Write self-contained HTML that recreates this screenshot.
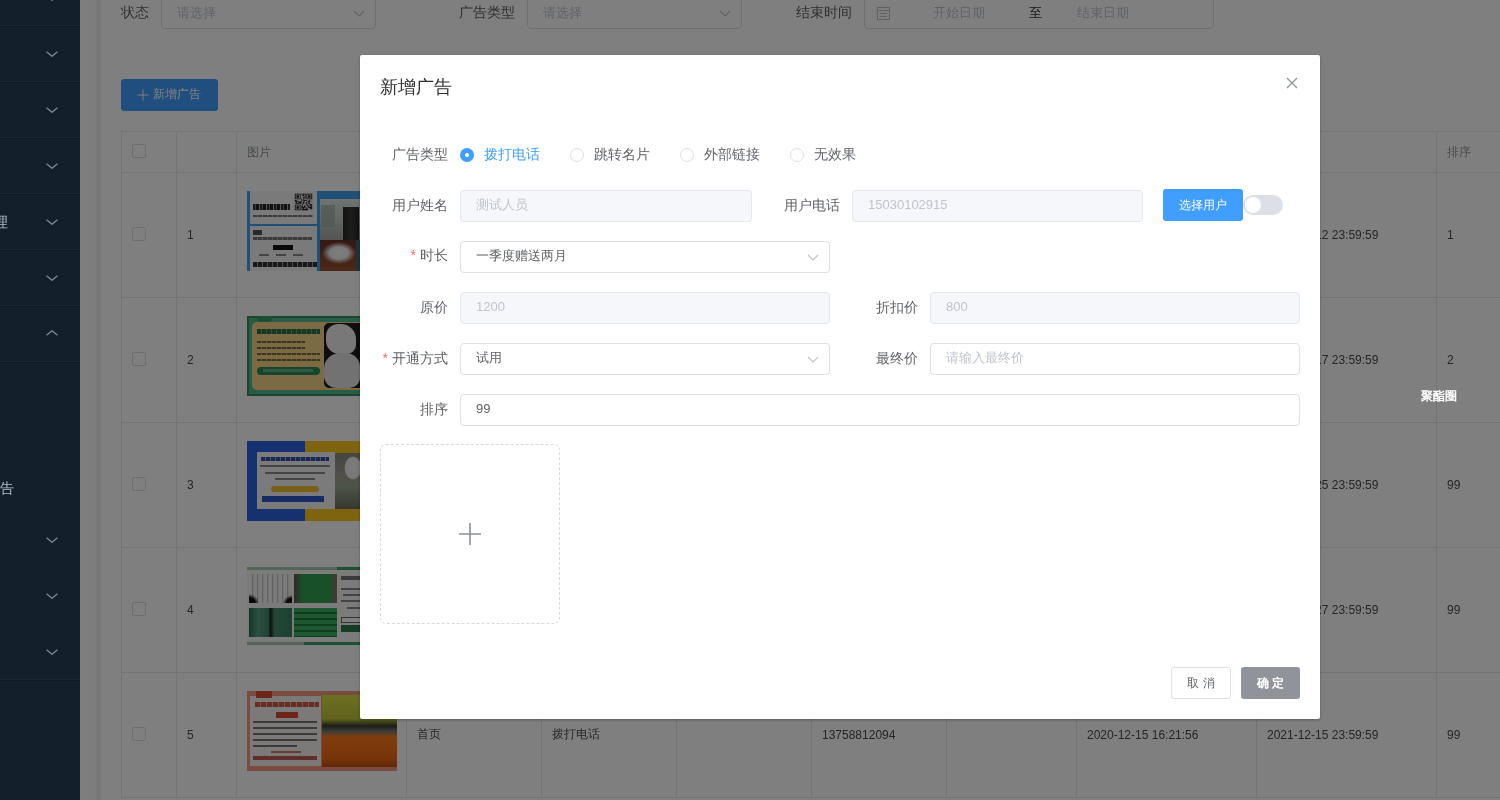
<!DOCTYPE html>
<html><head><meta charset="utf-8">
<style>
*{box-sizing:border-box;margin:0;padding:0}
html,body{width:1500px;height:800px;overflow:hidden;background:#fff;}
body{will-change:transform;font-family:"Liberation Sans",sans-serif;font-size:14px;color:#606266}
.a{position:absolute;white-space:nowrap}
#side{position:absolute;left:0;top:0;width:80px;height:800px;background:#131f2b;overflow:hidden}
.dv{position:absolute;left:0;width:80px;height:1px;background:#1a2633;box-shadow:0 1px 0 #0f1a24}
.chev{position:absolute;left:46px;width:12px;height:7px}
#gut{position:absolute;left:80px;top:0;width:21px;height:800px;background:linear-gradient(to right,#fdfdfd 0,#fbfbfb 16px,#f0f0f0 17px,#f0f0f0 20px,#fff 21px)}
.lbl{position:absolute;font-size:14px;color:#606266;line-height:16px;white-space:nowrap}
.sel{position:absolute;height:32px;border:1px solid #dcdfe6;border-radius:4px;background:#fff}
.ph{position:absolute;font-size:13px;color:#c0c4cc;line-height:16px;white-space:nowrap}
.tbl{position:absolute;left:121px;top:131px;width:1400px;height:667px}
.hl{position:absolute;height:1px;background:#e8e8e8}
.vl{position:absolute;width:1px;background:#e8e8e8}
.cb{position:absolute;width:14px;height:14px;border:1px solid #dcdfe6;border-radius:2px;background:#fff}
.td{position:absolute;font-size:12px;color:#4a4c50;line-height:14px;white-space:nowrap}
#ov{position:absolute;left:0;top:0;width:1500px;height:800px;background:rgba(0,0,0,.5)}
#dlg{position:absolute;left:360px;top:55px;width:960px;height:664px;background:#fff;border-radius:2px;box-shadow:0 1px 3px rgba(0,0,0,.3)}
.fl{position:absolute;font-size:14px;color:#606266;line-height:16px;white-space:nowrap;text-align:right}
.inp{position:absolute;height:32px;border:1px solid #dcdfe6;border-radius:4px;background:#fff}
.inp.dis{background:#f5f7fa;border-color:#e4e7ed}
.it{position:absolute;left:15px;top:6px;font-size:13px;line-height:16px;color:#606266;white-space:nowrap}
.dis .it,.it.ph2{color:#c0c4cc}
.req{color:#f56c6c;margin-right:4px}
</style></head><body>
<!-- sidebar -->
<div id="gut"></div>

<!-- filter row -->
<div class="lbl" style="left:121px;top:3.5px">状态</div>
<div class="sel" style="left:161px;top:-3px;width:215px"><div class="ph" style="left:15px;top:6.5px">请选择</div><svg class="a" style="left:190.5px;top:12px" width="12" height="7" viewBox="0 0 12 7"><polyline points="1,1 6,6 11,1" fill="none" stroke="#c0c4cc" stroke-width="1.2"/></svg></div>
<div class="lbl" style="left:459px;top:3.5px">广告类型</div>
<div class="sel" style="left:527px;top:-3px;width:215px"><div class="ph" style="left:15px;top:6.5px">请选择</div><svg class="a" style="left:190.5px;top:12px" width="12" height="7" viewBox="0 0 12 7"><polyline points="1,1 6,6 11,1" fill="none" stroke="#c0c4cc" stroke-width="1.2"/></svg></div>
<div class="lbl" style="left:796px;top:3.5px">结束时间</div>
<div class="sel" style="left:864px;top:-3px;width:350px">
<svg class="a" style="left:12px;top:8px" width="13" height="14" viewBox="0 0 13 14"><rect x="0.5" y="1.5" width="12" height="12" fill="none" stroke="#c0c4cc"/><path d="M0.5 4.5H12.5M3 7.5H10M3 10.5H10" stroke="#c0c4cc"/></svg>
<div class="ph" style="left:68px;top:6.5px">开始日期</div>
<div class="lbl" style="left:164px;top:6.5px;font-size:13px;color:#303133">至</div>
<div class="ph" style="left:212px;top:6.5px">结束日期</div>
</div>
<div class="a" style="left:121px;top:79px;width:97px;height:32px;border-radius:3px;background:#409eff;color:#fff;font-size:12px;line-height:14px;padding:8px 0 0 32px">新增广告<svg class="a" style="left:16px;top:10px" width="12" height="12" viewBox="0 0 12 12"><path d="M6 0.5V11.5M0.5 6H11.5" stroke="#fff" stroke-width="1" fill="none"/></svg></div>
<!-- table -->
<div class="hl" style="left:121px;top:131px;width:1379px"></div>
<div class="hl" style="left:121px;top:172px;width:1379px"></div>
<div class="hl" style="left:121px;top:297px;width:1379px"></div>
<div class="hl" style="left:121px;top:422px;width:1379px"></div>
<div class="hl" style="left:121px;top:547px;width:1379px"></div>
<div class="hl" style="left:121px;top:672px;width:1379px"></div>
<div class="hl" style="left:121px;top:797px;width:1379px"></div>
<div class="vl" style="left:121px;top:131px;height:667px"></div>
<div class="vl" style="left:176px;top:131px;height:667px"></div>
<div class="vl" style="left:236px;top:131px;height:667px"></div>
<div class="vl" style="left:406px;top:131px;height:667px"></div>
<div class="vl" style="left:541px;top:131px;height:667px"></div>
<div class="vl" style="left:676px;top:131px;height:667px"></div>
<div class="vl" style="left:811px;top:131px;height:667px"></div>
<div class="vl" style="left:946px;top:131px;height:667px"></div>
<div class="vl" style="left:1076px;top:131px;height:667px"></div>
<div class="vl" style="left:1256px;top:131px;height:667px"></div>
<div class="vl" style="left:1436px;top:131px;height:667px"></div>
<div class="cb" style="left:132px;top:144px"></div>
<div class="td" style="left:247px;top:145px;color:#909399">图片</div>
<div class="td" style="left:1447px;top:145px;color:#909399">排序</div>
<div class="cb" style="left:132px;top:227px"></div>
<div class="td" style="left:187px;top:227.5px">1</div>
<div class="td" style="left:1267px;top:227.5px">2021-12-12 23:59:59</div>
<div class="td" style="left:1447px;top:227.5px">1</div>
<div class="cb" style="left:132px;top:352px"></div>
<div class="td" style="left:187px;top:352.5px">2</div>
<div class="td" style="left:1267px;top:352.5px">2021-12-17 23:59:59</div>
<div class="td" style="left:1447px;top:352.5px">2</div>
<div class="cb" style="left:132px;top:477px"></div>
<div class="td" style="left:187px;top:477.5px">3</div>
<div class="td" style="left:1267px;top:477.5px">2021-12-25 23:59:59</div>
<div class="td" style="left:1447px;top:477.5px">99</div>
<div class="cb" style="left:132px;top:602px"></div>
<div class="td" style="left:187px;top:602.5px">4</div>
<div class="td" style="left:1267px;top:602.5px">2021-12-27 23:59:59</div>
<div class="td" style="left:1447px;top:602.5px">99</div>
<div class="cb" style="left:132px;top:727px"></div>
<div class="td" style="left:187px;top:727.5px">5</div>
<div class="td" style="left:1267px;top:727.5px">2021-12-15 23:59:59</div>
<div class="td" style="left:1447px;top:727.5px">99</div>
<div class="td" style="left:417px;top:726.5px">首页</div>
<div class="td" style="left:552px;top:726.5px">拨打电话</div>
<div class="td" style="left:822px;top:727.5px">13758812094</div>
<div class="td" style="left:1087px;top:727.5px">2020-12-15 16:21:56</div>
<div id="imgs">
<!-- img1 -->
<div class="a" style="left:247px;top:191px;width:150px;height:80px;background:#f4f4f4;overflow:hidden">
 <div class="a" style="left:0;top:0;width:3px;height:80px;background:#40a0ee"></div>
 <div class="a" style="left:3px;top:33px;width:68px;height:2px;background:#40a0ee"></div>
 <div class="a" style="left:70px;top:0;width:3px;height:80px;background:#40a0ee"></div>
 <svg class="a" style="left:47px;top:2px" width="19" height="18" viewBox="-1 -1 23 23" preserveAspectRatio="none"><rect x="-1" y="-1" width="23" height="23" fill="#e8e8e8"/><path d="M0 0h1v1h-1zM1 0h1v1h-1zM2 0h1v1h-1zM3 0h1v1h-1zM4 0h1v1h-1zM5 0h1v1h-1zM6 0h1v1h-1zM8 0h1v1h-1zM9 0h1v1h-1zM10 0h1v1h-1zM11 0h1v1h-1zM12 0h1v1h-1zM14 0h1v1h-1zM15 0h1v1h-1zM16 0h1v1h-1zM17 0h1v1h-1zM18 0h1v1h-1zM19 0h1v1h-1zM20 0h1v1h-1zM0 1h1v1h-1zM6 1h1v1h-1zM10 1h1v1h-1zM12 1h1v1h-1zM14 1h1v1h-1zM20 1h1v1h-1zM0 2h1v1h-1zM2 2h1v1h-1zM3 2h1v1h-1zM4 2h1v1h-1zM6 2h1v1h-1zM9 2h1v1h-1zM10 2h1v1h-1zM12 2h1v1h-1zM14 2h1v1h-1zM16 2h1v1h-1zM17 2h1v1h-1zM18 2h1v1h-1zM20 2h1v1h-1zM0 3h1v1h-1zM2 3h1v1h-1zM3 3h1v1h-1zM4 3h1v1h-1zM6 3h1v1h-1zM12 3h1v1h-1zM14 3h1v1h-1zM16 3h1v1h-1zM17 3h1v1h-1zM18 3h1v1h-1zM20 3h1v1h-1zM0 4h1v1h-1zM2 4h1v1h-1zM3 4h1v1h-1zM4 4h1v1h-1zM6 4h1v1h-1zM10 4h1v1h-1zM11 4h1v1h-1zM12 4h1v1h-1zM14 4h1v1h-1zM16 4h1v1h-1zM17 4h1v1h-1zM18 4h1v1h-1zM20 4h1v1h-1zM0 5h1v1h-1zM6 5h1v1h-1zM10 5h1v1h-1zM14 5h1v1h-1zM20 5h1v1h-1zM0 6h1v1h-1zM1 6h1v1h-1zM2 6h1v1h-1zM3 6h1v1h-1zM4 6h1v1h-1zM5 6h1v1h-1zM6 6h1v1h-1zM8 6h1v1h-1zM11 6h1v1h-1zM12 6h1v1h-1zM14 6h1v1h-1zM15 6h1v1h-1zM16 6h1v1h-1zM17 6h1v1h-1zM18 6h1v1h-1zM19 6h1v1h-1zM20 6h1v1h-1zM8 7h1v1h-1zM10 7h1v1h-1zM0 8h1v1h-1zM1 8h1v1h-1zM8 8h1v1h-1zM10 8h1v1h-1zM11 8h1v1h-1zM12 8h1v1h-1zM13 8h1v1h-1zM14 8h1v1h-1zM17 8h1v1h-1zM0 9h1v1h-1zM1 9h1v1h-1zM2 9h1v1h-1zM3 9h1v1h-1zM4 9h1v1h-1zM8 9h1v1h-1zM11 9h1v1h-1zM16 9h1v1h-1zM17 9h1v1h-1zM19 9h1v1h-1zM1 10h1v1h-1zM2 10h1v1h-1zM5 10h1v1h-1zM6 10h1v1h-1zM7 10h1v1h-1zM10 10h1v1h-1zM14 10h1v1h-1zM16 10h1v1h-1zM17 10h1v1h-1zM1 11h1v1h-1zM4 11h1v1h-1zM5 11h1v1h-1zM6 11h1v1h-1zM7 11h1v1h-1zM9 11h1v1h-1zM10 11h1v1h-1zM11 11h1v1h-1zM13 11h1v1h-1zM14 11h1v1h-1zM17 11h1v1h-1zM1 12h1v1h-1zM2 12h1v1h-1zM3 12h1v1h-1zM4 12h1v1h-1zM6 12h1v1h-1zM7 12h1v1h-1zM10 12h1v1h-1zM14 12h1v1h-1zM16 12h1v1h-1zM17 12h1v1h-1zM9 13h1v1h-1zM14 13h1v1h-1zM18 13h1v1h-1zM19 13h1v1h-1zM20 13h1v1h-1zM0 14h1v1h-1zM1 14h1v1h-1zM2 14h1v1h-1zM3 14h1v1h-1zM4 14h1v1h-1zM5 14h1v1h-1zM6 14h1v1h-1zM9 14h1v1h-1zM12 14h1v1h-1zM14 14h1v1h-1zM15 14h1v1h-1zM18 14h1v1h-1zM19 14h1v1h-1zM0 15h1v1h-1zM6 15h1v1h-1zM8 15h1v1h-1zM11 15h1v1h-1zM15 15h1v1h-1zM16 15h1v1h-1zM17 15h1v1h-1zM19 15h1v1h-1zM20 15h1v1h-1zM0 16h1v1h-1zM2 16h1v1h-1zM3 16h1v1h-1zM4 16h1v1h-1zM6 16h1v1h-1zM8 16h1v1h-1zM9 16h1v1h-1zM11 16h1v1h-1zM12 16h1v1h-1zM16 16h1v1h-1zM18 16h1v1h-1zM20 16h1v1h-1zM0 17h1v1h-1zM2 17h1v1h-1zM3 17h1v1h-1zM4 17h1v1h-1zM6 17h1v1h-1zM8 17h1v1h-1zM9 17h1v1h-1zM10 17h1v1h-1zM11 17h1v1h-1zM12 17h1v1h-1zM14 17h1v1h-1zM16 17h1v1h-1zM17 17h1v1h-1zM18 17h1v1h-1zM19 17h1v1h-1zM20 17h1v1h-1zM0 18h1v1h-1zM2 18h1v1h-1zM3 18h1v1h-1zM4 18h1v1h-1zM6 18h1v1h-1zM8 18h1v1h-1zM10 18h1v1h-1zM14 18h1v1h-1zM18 18h1v1h-1zM19 18h1v1h-1zM20 18h1v1h-1zM0 19h1v1h-1zM6 19h1v1h-1zM9 19h1v1h-1zM10 19h1v1h-1zM11 19h1v1h-1zM12 19h1v1h-1zM13 19h1v1h-1zM14 19h1v1h-1zM15 19h1v1h-1zM19 19h1v1h-1zM0 20h1v1h-1zM1 20h1v1h-1zM2 20h1v1h-1zM3 20h1v1h-1zM4 20h1v1h-1zM5 20h1v1h-1zM6 20h1v1h-1zM8 20h1v1h-1zM9 20h1v1h-1zM10 20h1v1h-1zM11 20h1v1h-1zM12 20h1v1h-1zM13 20h1v1h-1zM14 20h1v1h-1zM15 20h1v1h-1z" fill="#1a1a1a"/></svg>
 <div class="a" style="left:6px;top:13px;width:37px;height:6px;background:repeating-linear-gradient(90deg,#333 0 2px,#777 2px 3px,#222 3px 6px,#aaa 6px 7px)"></div>
 <div class="a" style="left:6px;top:24px;width:60px;height:2px;background:repeating-linear-gradient(90deg,#777 0 4px,#bbb 4px 5px)"></div>
 <div class="a" style="left:6px;top:39px;width:9px;height:5px;background:#555"></div>
 <div class="a" style="left:6px;top:46px;width:59px;height:3px;background:repeating-linear-gradient(90deg,#777 0 4px,#aaa 4px 5px)"></div>
 <div class="a" style="left:26px;top:54px;width:20px;height:5px;background:#111"></div>
 <div class="a" style="left:12px;top:63px;width:50px;height:2px;background:repeating-linear-gradient(90deg,#888 0 10px,transparent 10px 17px)"></div>
 <div class="a" style="left:6px;top:71px;width:64px;height:5px;background:repeating-linear-gradient(90deg,#333 0 4px,#999 4px 5px)"></div>
 <div class="a" style="left:73px;top:0;width:77px;height:8px;background:#40a0ee"></div>
 <div class="a" style="left:73px;top:8px;width:77px;height:41px;background:linear-gradient(180deg,#dfe6e2 0,#c8d4cc 40%,#b8bcb8 70%,#a8aaa8 100%)"></div>
 <div class="a" style="left:74px;top:14px;width:14px;height:22px;background:#9ab0a0;opacity:.7"></div>
 <div class="a" style="left:96px;top:16px;width:16px;height:33px;background:linear-gradient(90deg,#2a2a28,#3a3a38 50%,#222)"></div>
 <div class="a" style="left:73px;top:49px;width:36px;height:31px;background:radial-gradient(ellipse 17px 11px at 19px 13px,#fff 0,#f4f0f0 55%,transparent 100%),linear-gradient(180deg,#6a3028 0,#9a5030 100%)"></div>
 <div class="a" style="left:109px;top:49px;width:4px;height:31px;background:#3a6a70"></div>
 <div class="a" style="left:113px;top:49px;width:37px;height:31px;background:#a0582a"></div>
</div>
<!-- img2 -->
<div class="a" style="left:247px;top:316px;width:150px;height:80px;background:#52b88a;overflow:hidden">
 <div class="a" style="left:0;top:0;width:150px;height:80px;border:2px solid #3a8a66"></div>
 <div class="a" style="left:5px;top:6px;width:145px;height:68px;border-radius:5px;background:#f8d684"></div>
 <div class="a" style="left:10px;top:0px;width:15px;height:6px;border-radius:0 0 4px 4px;background:#3a9a6a"></div>
 <div class="a" style="left:10px;top:13px;width:63px;height:5px;background:repeating-linear-gradient(90deg,#2a7048 0 4px,#7a9a60 4px 5px)"></div>
 <div class="a" style="left:10px;top:25px;width:48px;height:2px;background:repeating-linear-gradient(90deg,#7a6a48 0 4px,#c0a870 4px 5px)"></div>
 <div class="a" style="left:10px;top:31px;width:48px;height:2px;background:repeating-linear-gradient(90deg,#7a6a48 0 4px,#c0a870 4px 5px)"></div>
 <div class="a" style="left:10px;top:37px;width:63px;height:2px;background:repeating-linear-gradient(90deg,#7a6a48 0 4px,#c0a870 4px 5px)"></div>
 <div class="a" style="left:10px;top:43px;width:63px;height:2px;background:repeating-linear-gradient(90deg,#7a6a48 0 4px,#c0a870 4px 5px)"></div>
 <div class="a" style="left:10px;top:51px;width:63px;height:8px;border-radius:4px;background:#2a8a5a"></div>
 <div class="a" style="left:16px;top:53px;width:50px;height:3px;background:#8ac8a0;opacity:.6"></div>
 <div class="a" style="left:77px;top:7px;width:73px;height:65px;border-radius:5px;background:#1e1c1c;overflow:hidden">
  <div class="a" style="left:2px;top:1px;width:30px;height:30px;border-radius:40% 50% 30% 45%;background:#f0f0f0"></div>
  <div class="a" style="left:0px;top:30px;width:36px;height:35px;border-radius:45% 40% 30% 35%;background:#e4e4e4"></div>
 </div>
</div>
<!-- img3 -->
<div class="a" style="left:247px;top:441px;width:150px;height:80px;background:linear-gradient(90deg,#2c62e0 0,#2c62e0 58px,#ffc820 58px);overflow:hidden">
 <div class="a" style="left:10px;top:11px;width:78px;height:57px;background:#f6f6f6"></div>
 <div class="a" style="left:14px;top:16px;width:68px;height:4px;background:repeating-linear-gradient(90deg,#3050b0 0 4px,#a0a8d0 4px 5px)"></div>
 <div class="a" style="left:13px;top:24px;width:70px;height:2px;background:#8a8a8a"></div>
 <div class="a" style="left:18px;top:31px;width:60px;height:2px;background:#8a8a8a"></div>
 <div class="a" style="left:28px;top:37px;width:40px;height:2px;background:#8a8a8a"></div>
 <div class="a" style="left:24px;top:45px;width:48px;height:6px;border-radius:3px;background:#f0c030"></div>
 <div class="a" style="left:15px;top:55px;width:62px;height:6px;background:#2c56c8"></div>
 <div class="a" style="left:88px;top:12px;width:62px;height:56px;background:radial-gradient(ellipse 11px 15px at 18px 15px,#fafafa 0,#eee 70%,transparent 80%),linear-gradient(180deg,#8a8a80 0,#a0a090 40%,#9aa890 60%,#6a7060 100%)"></div>
</div>
<!-- img4 -->
<div class="a" style="left:247px;top:566px;width:150px;height:80px;background:#f6f6f6;overflow:hidden">
 <div class="a" style="left:0;top:1px;width:150px;height:3px;background:linear-gradient(90deg,#a8c8b0 0,#a8c8b0 90px,#3aa060 90px)"></div>
 <div class="a" style="left:0;top:76px;width:150px;height:3px;background:linear-gradient(90deg,#a8c8b0 0,#a8c8b0 57px,#3aa060 57px)"></div>
 <div class="a" style="left:2px;top:8px;width:43px;height:29px;background:radial-gradient(ellipse 10px 9px at 0 29px,#111 0,#111 60%,transparent 100%),radial-gradient(ellipse 9px 8px at 43px 29px,#161616 0,#161616 60%,transparent 100%),repeating-linear-gradient(90deg,#f6f6f6 0 3px,#c0c4c8 3px 4px,#e8e8e8 4px 5px)"></div>
 
 <div class="a" style="left:47px;top:8px;width:43px;height:29px;background:linear-gradient(90deg,#6a5040 0,#30a050 20%,#30a050 80%,#8a7060 100%)"></div>
 <div class="a" style="left:2px;top:42px;width:43px;height:29px;background:linear-gradient(90deg,#2a6a50 0,#5aa088 20%,#3a8a6a 45%,#222 50%,#4a9070 60%,#3a8060 100%)"></div>
 <div class="a" style="left:47px;top:42px;width:43px;height:29px;background:repeating-linear-gradient(180deg,#3cb060 0 4px,#1f7a3e 4px 6px)"></div>
 <div class="a" style="left:94px;top:10px;width:56px;height:4px;background:#777"></div>
 <div class="a" style="left:94px;top:22px;width:56px;height:2px;background:#888"></div>
 <div class="a" style="left:96px;top:28px;width:54px;height:2px;background:#888"></div>
 <div class="a" style="left:94px;top:34px;width:56px;height:2px;background:#888"></div>
 <div class="a" style="left:100px;top:41px;width:50px;height:2px;background:#888"></div>
 <div class="a" style="left:94px;top:51px;width:56px;height:6px;border:1px solid #666;background:#fff"></div>
 <div class="a" style="left:94px;top:59px;width:56px;height:7px;background:#2a7a4a"></div>
</div>
<!-- img5 -->
<div class="a" style="left:247px;top:691px;width:150px;height:80px;background:#f09a80;overflow:hidden">
 <div class="a" style="left:3px;top:5px;width:71px;height:70px;background:#f8f4f2"></div>
 <div class="a" style="left:9px;top:0;width:16px;height:7px;background:#d84a30"></div>
 <div class="a" style="left:8px;top:11px;width:64px;height:5px;background:repeating-linear-gradient(90deg,#d05a44 0 5px,#f0b0a0 5px 6px)"></div>
 <div class="a" style="left:29px;top:21px;width:22px;height:6px;background:#d84a30"></div>
 <div class="a" style="left:6px;top:30px;width:64px;height:2px;background:#777"></div>
 <div class="a" style="left:6px;top:36px;width:64px;height:2px;background:#777"></div>
 <div class="a" style="left:6px;top:42px;width:64px;height:2px;background:#777"></div>
 <div class="a" style="left:6px;top:48px;width:64px;height:2px;background:#777"></div>
 <div class="a" style="left:6px;top:54px;width:44px;height:2px;background:#777"></div>
 <div class="a" style="left:24px;top:60px;width:30px;height:2px;background:#d07a6a"></div>
 <div class="a" style="left:6px;top:65px;width:64px;height:4px;background:#c05a50"></div>
 <div class="a" style="left:75px;top:4px;width:75px;height:72px;background:linear-gradient(180deg,#d8e048 0,#c0c838 33%,#3a3a30 43%,#707a70 50%,#ff7a20 58%,#f06810 88%,#c05010 100%)"></div>
</div>
</div>
</div>

<div id="ov"></div>
<div id="side">
<div class="dv" style="top:25px"></div>
<div class="dv" style="top:81px"></div>
<div class="dv" style="top:137px"></div>
<div class="dv" style="top:193px"></div>
<div class="dv" style="top:249px"></div>
<div class="dv" style="top:305px"></div>
<div class="dv" style="top:361px"></div>
<div class="dv" style="top:679px"></div>
<svg class="chev" style="top:-6.0px" viewBox="0 0 12 7"><polyline points="0.5,1.8 6,6.3 11.5,1.8" fill="none" stroke="#7f8994" stroke-width="1.25"/></svg>
<svg class="chev" style="top:50.0px" viewBox="0 0 12 7"><polyline points="0.5,1.8 6,6.3 11.5,1.8" fill="none" stroke="#7f8994" stroke-width="1.25"/></svg>
<svg class="chev" style="top:106.0px" viewBox="0 0 12 7"><polyline points="0.5,1.8 6,6.3 11.5,1.8" fill="none" stroke="#7f8994" stroke-width="1.25"/></svg>
<svg class="chev" style="top:162.0px" viewBox="0 0 12 7"><polyline points="0.5,1.8 6,6.3 11.5,1.8" fill="none" stroke="#7f8994" stroke-width="1.25"/></svg>
<svg class="chev" style="top:218.0px" viewBox="0 0 12 7"><polyline points="0.5,1.8 6,6.3 11.5,1.8" fill="none" stroke="#7f8994" stroke-width="1.25"/></svg>
<svg class="chev" style="top:274.0px" viewBox="0 0 12 7"><polyline points="0.5,1.8 6,6.3 11.5,1.8" fill="none" stroke="#7f8994" stroke-width="1.25"/></svg>
<svg class="chev" style="top:536.0px" viewBox="0 0 12 7"><polyline points="0.5,1.8 6,6.3 11.5,1.8" fill="none" stroke="#7f8994" stroke-width="1.25"/></svg>
<svg class="chev" style="top:592.0px" viewBox="0 0 12 7"><polyline points="0.5,1.8 6,6.3 11.5,1.8" fill="none" stroke="#7f8994" stroke-width="1.25"/></svg>
<svg class="chev" style="top:648.0px" viewBox="0 0 12 7"><polyline points="0.5,1.8 6,6.3 11.5,1.8" fill="none" stroke="#7f8994" stroke-width="1.25"/></svg>
<svg class="chev" style="top:330.0px" viewBox="0 0 12 7"><polyline points="0.5,5.2 6,0.7 11.5,5.2" fill="none" stroke="#7f8994" stroke-width="1.25"/></svg>
<div class="a" style="left:-6px;top:214px;font-size:14px;line-height:16px;color:#b4bcc4">理</div>
<div class="a" style="left:0px;top:480px;font-size:14px;line-height:16px;color:#b4bcc4">告</div>
</div>


<!-- dialog -->
<div id="dlg"></div>
<div class="a" style="left:380px;top:76.5px;font-size:18px;line-height:20px;color:#303133">新增广告</div>
<svg class="a" style="left:1286px;top:77px" width="12" height="12" viewBox="0 0 12 12"><path d="M1 1L11 11M11 1L1 11" stroke="#909399" stroke-width="1.3" fill="none"/></svg>
<div class="fl" style="left:248px;width:200px;top:145.5px">广告类型</div>
<div class="a" style="left:460px;top:148px;width:14px;height:14px;border-radius:50%;background:#409eff"><div class="a" style="left:5px;top:5px;width:4px;height:4px;border-radius:50%;background:#fff"></div></div>
<div class="fl" style="left:484px;top:145.5px;color:#409eff">拨打电话</div>
<div class="a" style="left:570px;top:148px;width:14px;height:14px;border-radius:50%;border:1px solid #dcdfe6;background:#fff"></div>
<div class="fl" style="left:594px;top:145.5px">跳转名片</div>
<div class="a" style="left:680px;top:148px;width:14px;height:14px;border-radius:50%;border:1px solid #dcdfe6;background:#fff"></div>
<div class="fl" style="left:704px;top:145.5px">外部链接</div>
<div class="a" style="left:790px;top:148px;width:14px;height:14px;border-radius:50%;border:1px solid #dcdfe6;background:#fff"></div>
<div class="fl" style="left:814px;top:145.5px">无效果</div>
<div class="fl" style="left:248px;width:200px;top:196.5px">用户姓名</div>
<div class="inp dis" style="left:460px;top:190px;width:292px"><div class="it">测试人员</div></div>
<div class="fl" style="left:640px;width:200px;top:196.5px">用户电话</div>
<div class="inp dis" style="left:852px;top:190px;width:291px"><div class="it">15030102915</div></div>
<div class="a" style="left:1163px;top:189px;width:80px;height:32px;border-radius:3px;background:#409eff;color:#fff;font-size:12px;line-height:14px;padding-top:9px;text-align:center">选择用户</div>
<div class="a" style="left:1243px;top:195px;width:40px;height:20px;border-radius:10px;background:#dcdfe6"><div class="a" style="left:2px;top:2px;width:16px;height:16px;border-radius:50%;background:#fff"></div></div>
<div class="fl" style="left:248px;width:200px;top:246.5px"><span class="req">*</span>时长</div>
<div class="inp " style="left:460px;top:241px;width:370px"><div class="it">一季度赠送两月</div><svg class="a" style="left:346px;top:12px" width="12" height="7" viewBox="0 0 12 7"><polyline points="1,1 6,6 11,1" fill="none" stroke="#c0c4cc" stroke-width="1.2"/></svg></div>
<div class="fl" style="left:248px;width:200px;top:298.5px">原价</div>
<div class="inp dis" style="left:460px;top:292px;width:370px"><div class="it">1200</div></div>
<div class="fl" style="left:718px;width:200px;top:298.5px">折扣价</div>
<div class="inp dis" style="left:930px;top:292px;width:370px"><div class="it">800</div></div>
<div class="fl" style="left:248px;width:200px;top:349.5px"><span class="req">*</span>开通方式</div>
<div class="inp " style="left:460px;top:343px;width:370px"><div class="it">试用</div><svg class="a" style="left:346px;top:12px" width="12" height="7" viewBox="0 0 12 7"><polyline points="1,1 6,6 11,1" fill="none" stroke="#c0c4cc" stroke-width="1.2"/></svg></div>
<div class="fl" style="left:718px;width:200px;top:349.5px">最终价</div>
<div class="inp " style="left:930px;top:343px;width:370px"><div class="it" style="color:#c0c4cc">请输入最终价</div></div>
<div class="fl" style="left:248px;width:200px;top:400.5px">排序</div>
<div class="inp " style="left:460px;top:394px;width:840px"><div class="it">99</div></div>
<div class="a" style="left:380px;top:444px;width:180px;height:180px;border:1px dashed #d9d9d9;border-radius:6px"></div>
<svg class="a" style="left:458px;top:521.5px" width="24" height="24" viewBox="0 0 24 24"><path d="M12 1V23M1 12H23" stroke="#8a8e94" stroke-width="1.6" fill="none"/></svg>
<div class="a" style="left:1171px;top:667px;width:60px;height:32px;border-radius:3px;border:1px solid #dcdfe6;background:#fff;color:#606266;font-size:12px;line-height:14px;padding-top:8px;text-align:center">取 消</div>
<div class="a" style="left:1241px;top:667px;width:59px;height:32px;border-radius:3px;background:#909399;color:#fff;font-size:12px;font-weight:bold;line-height:14px;padding-top:9px;text-align:center">确 定</div>
<div class="a" style="left:1421px;top:389px;font-size:12px;line-height:14px;color:#fff;font-weight:bold">聚酯圈</div>
</body></html>
